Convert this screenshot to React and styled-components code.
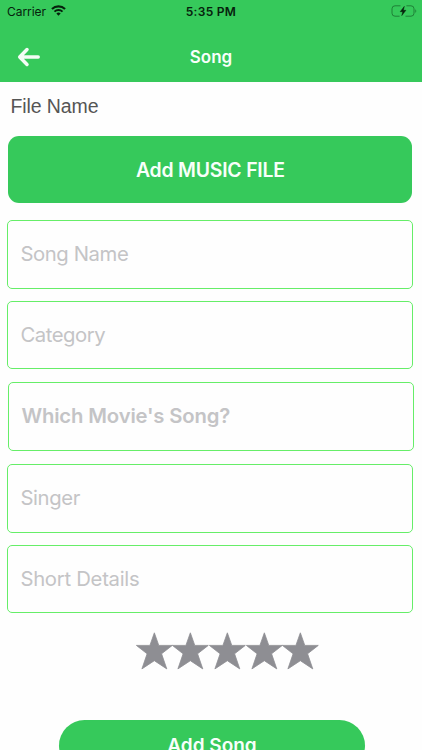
import React, { useState } from 'react';
import styled, { createGlobalStyle } from 'styled-components';

const FIELDS = [
  { name: 'songName', placeholder: 'Song Name', height: 69, gap: 12, spacing: -0.4 },
  { name: 'category', placeholder: 'Category', height: 68, gap: 13, spacing: -0.45 },
  {
    name: 'movie',
    placeholder: "Which Movie's Song?",
    height: 69,
    gap: 13,
    spacing: -0.15,
    bold: true,
  },
  { name: 'singer', placeholder: 'Singer', height: 69, gap: 12, spacing: -0.35 },
  { name: 'details', placeholder: 'Short Details', height: 68, gap: 19, spacing: -0.27 },
];

const WifiIcon = () => (
  <svg width="15" height="11.3" viewBox="0 0 16 12" fill="none" stroke="#06210c">
    <path d="M1 4.3a10 10 0 0 1 14 0" strokeWidth="2.2" />
    <path d="M3.7 7.1a6.1 6.1 0 0 1 8.6 0" strokeWidth="2" />
    <path d="M8 11.4 5.7 9.1a3.3 3.3 0 0 1 4.6 0z" fill="#06210c" stroke="none" />
  </svg>
);

const BatteryIcon = () => (
  <svg width="26" height="12" viewBox="0 0 26 12">
    <path
      d="M9.5 .8H4A3 3 0 0 0 1 3.8v4.4a3 3 0 0 0 3 3h4.6M15.4 .8H20a3 3 0 0 1 3 3v4.4a3 3 0 0 1-3 3h-5.5"
      fill="none"
      stroke="#1f8037"
      strokeWidth="1"
    />
    <path d="M24.3 4.2c1.3.4 1.3 3.2 0 3.6z" fill="#1f8037" />
    <path
      d="M13.3 1.4 9.2 6.7h2.6L10.8 10.6l4.1-5.3h-2.6z"
      fill="#06210c"
      stroke="#06210c"
      strokeWidth=".5"
      strokeLinejoin="round"
    />
  </svg>
);

const BackIcon = () => (
  <svg width="24" height="22" viewBox="0 0 24 22" fill="none">
    <path
      d="M21.2 11H3.5M10 3.6 2.7 11l7.3 7.4"
      stroke="#f4fcf5"
      strokeWidth="3.5"
      strokeLinecap="round"
      strokeLinejoin="round"
    />
  </svg>
);

const StarIcon = () => (
  <svg width="36.7" height="38" viewBox="0 0 36.7 38">
    <path
      d="M18.35 .8 22.8 13.4H36.3L25.6 21.8 30.8 36.9 18.35 28.7 5.9 36.9 11.1 21.8 .4 13.4H13.9z"
      fill="#8e8e93"
      stroke="#8e8e93"
      strokeWidth=".8"
      strokeLinejoin="round"
    />
  </svg>
);

const App = () => {
  const [values, setValues] = useState({});

  const onChange = (e) => {
    setValues({ ...values, [e.target.name]: e.target.value });
  };

  return (
    <>
      <GlobalStyle />
      <Screen>
        <Header>
          <StatusBar>
            <Carrier>
              Carrier
              <WifiIcon />
            </Carrier>
            <Time>5:35 PM</Time>
            <Battery>
              <BatteryIcon />
            </Battery>
          </StatusBar>
          <NavBar>
            <BackBtn aria-label="Back">
              <BackIcon />
            </BackBtn>
            <Title>Song</Title>
          </NavBar>
        </Header>
        <FileName>File Name</FileName>
        <FileBtn>Add MUSIC FILE</FileBtn>
        <Form>
          {FIELDS.map((field) => (
            <Field
              key={field.name}
              name={field.name}
              placeholder={field.placeholder}
              value={values[field.name] || ''}
              onChange={onChange}
              $height={field.height}
              $gap={field.gap}
              $spacing={field.spacing}
              $bold={field.bold}
            />
          ))}
        </Form>
        <Stars>
          {[1, 2, 3, 4, 5].map((star) => (
            <StarIcon key={star} />
          ))}
        </Stars>
        <SubmitBtn>Add Song</SubmitBtn>
      </Screen>
    </>
  );
};

const GlobalStyle = createGlobalStyle`
  body {
    margin: 0;
    background-color: #fefefe;
    font-family: Inter, 'Liberation Sans', sans-serif;
  }

  * {
    box-sizing: border-box;
  }

  svg {
    display: block;
    flex-shrink: 0;
    overflow: visible;
  }

  button {
    padding: 0;
    border: none;
    font-family: inherit;
    color: #f8fffa;
    cursor: pointer;
  }
`;

const Screen = styled.div`
  display: flex;
  flex-direction: column;
  width: 422px;
  height: 750px;
  overflow: hidden;
`;

const Header = styled.header`
  flex-shrink: 0;
  height: 82px;
  background-color: #36c95b;
`;

const StatusBar = styled.div`
  display: grid;
  grid-template-columns: 1fr auto 1fr;
  align-items: center;
  height: 22px;
  padding: 0 5px 0 7px;
  color: #06210c;
`;

const Carrier = styled.div`
  display: flex;
  align-items: center;
  gap: 5px;
  font-size: 12px;
  letter-spacing: -0.05px;
`;

const Time = styled.div`
  margin-right: 2px;
  font-size: 12px;
  font-weight: 600;
  letter-spacing: 0.3px;
`;

const Battery = styled.div`
  justify-self: end;
`;

const NavBar = styled.div`
  display: grid;
  grid-template-columns: 40px 1fr 40px;
  align-items: center;
  height: 60px;
  padding: 9px 16px 0;
`;

const BackBtn = styled.button`
  width: 24px;
  margin-left: 1px;
  background: none;
`;

const Title = styled.h1`
  margin: 0;
  color: #f8fffa;
  font-size: 17px;
  font-weight: 600;
  line-height: 22px;
  text-align: center;
`;

const FileName = styled.p`
  flex-shrink: 0;
  height: 24px;
  margin: 12px 0 18px 10.5px;
  color: #555;
  font-family: 'Liberation Sans', Arial, sans-serif;
  font-size: 19.5px;
  letter-spacing: -0.1px;
  line-height: 24px;
`;

const FileBtn = styled.button`
  flex-shrink: 0;
  width: 404px;
  height: 67px;
  margin: 0 0 17px 8.4px;
  background-color: #36c95b;
  border-radius: 11px;
  font-size: 19.4px;
  font-weight: 600;
  letter-spacing: -0.2px;
`;

const Form = styled.div`
  display: flex;
  flex-direction: column;
  flex-shrink: 0;
  padding-left: 7px;
`;

const Field = styled.input`
  width: 406px;
  height: ${({ $height }) => $height}px;
  margin: 0 0 ${({ $gap }) => $gap}px ${({ $bold }) => ($bold ? 1 : 0)}px;
  padding: 0 12.4px 2px;
  background-color: #fefefe;
  border: 1px solid #66ee68;
  border-radius: 5px;
  outline: none;
  font-family: inherit;
  font-size: 20.3px;
  font-weight: ${({ $bold }) => ($bold ? 600 : 400)};
  letter-spacing: ${({ $spacing }) => $spacing}px;

  &::placeholder {
    color: #c4c4c6;
    opacity: 1;
  }
`;

const Stars = styled.div`
  display: flex;
  flex-shrink: 0;
  margin: 0 0 50px 135.5px;
`;

const SubmitBtn = styled.button`
  flex-shrink: 0;
  width: 306px;
  height: 51px;
  margin-left: 59px;
  background-color: #36c95b;
  border-radius: 26px;
  font-size: 19px;
  font-weight: 600;
`;

export default App;
